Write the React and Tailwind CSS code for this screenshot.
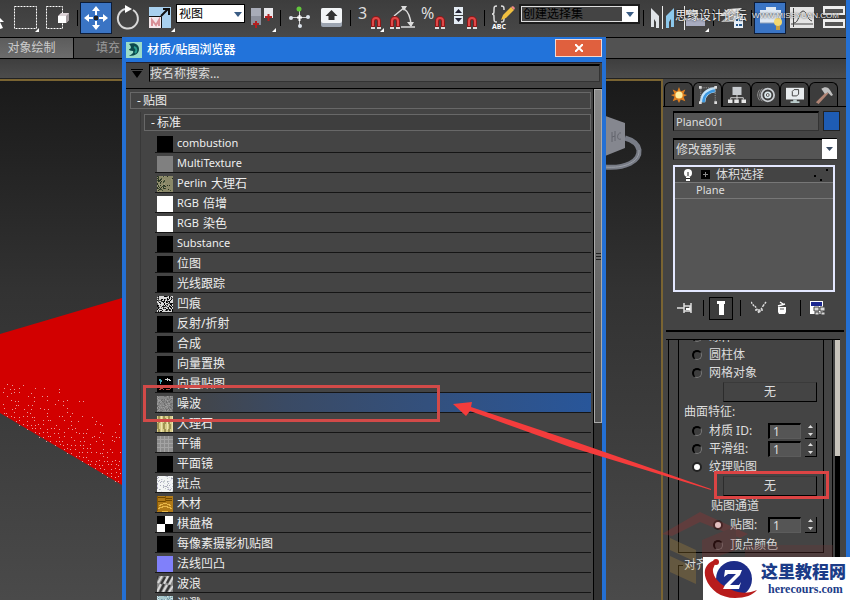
import React from 'react';
import clsx from 'clsx';

const MAPS = [
  { latin: 'combustion', kind: 'black' },
  { latin: 'MultiTexture', kind: 'gray' },
  { latin: 'Perlin', name: '大理石', kind: 'perlin' },
  { latin: 'RGB', name: '倍增', kind: 'white' },
  { latin: 'RGB', name: '染色', kind: 'white' },
  { latin: 'Substance', kind: 'black' },
  { name: '位图', kind: 'black' },
  { name: '光线跟踪', kind: 'black' },
  { name: '凹痕', kind: 'dent' },
  { name: '反射/折射', kind: 'black' },
  { name: '合成', kind: 'black' },
  { name: '向量置换', kind: 'black' },
  { name: '向量贴图', kind: 'vector' },
  { name: '噪波', kind: 'noise', selected: true },
  { name: '大理石', kind: 'marble' },
  { name: '平铺', kind: 'tiles' },
  { name: '平面镜', kind: 'black' },
  { name: '斑点', kind: 'speckle' },
  { name: '木材', kind: 'wood' },
  { name: '棋盘格', kind: 'checker' },
  { name: '每像素摄影机贴图', kind: 'black' },
  { name: '法线凹凸', kind: 'normal' },
  { name: '波浪', kind: 'waves' },
  { name: '泼溅', kind: 'splat' },
];

const BASE = {
  black: '#000',
  gray: '#808080',
  white: '#fff',
  perlin: '#8a8868',
  dent: '#d8d8d8',
  vector: '#000',
  noise: '#888',
  marble: '#d8cc88',
  tiles: '#8c8c8c',
  speckle: '#f2f4f4',
  wood: '#b07a18',
  checker: '#fff',
  normal: '#8080fa',
  waves: '#888',
  splat: '#a8c8cc',
};

const GRAIN = {
  dent: ['#111', '#555', '#000'],
  noise: ['#777', '#9c9c9c', '#6c6c6c'],
  speckle: ['#c4cccc', '#aab', '#dde'],
  perlin: ['#3c4a34', '#26301f', '#9c9a78'],
  splat: ['#7898a0', '#d0e4e8', '#8ab'],
};

// cheap deterministic hash, keeps the thumbnails stable between renders
const rand = (a, b) => {
  const v = Math.sin(a * 127.1 + b * 311.7) * 43758.5453;
  return v - Math.floor(v);
};

function Thumb({ kind }) {
  const grain = GRAIN[kind];
  const dots = [];
  if (grain) {
    for (let y = 0; y < 16; y++) {
      for (let x = 0; x < 16; x++) {
        const limit = kind === 'perlin' ? (x < 8 ? 0.55 : 0.06) : kind === 'speckle' ? 0.25 : 0.5;
        if (rand(x, y) < limit) {
          dots.push(<rect key={`${x}-${y}`} x={x} y={y} width="1" height="1" fill={grain[Math.floor(rand(y + 5, x * 3) * 3)]} />);
        }
      }
    }
  }
  return (
    <svg viewBox="0 0 16 16" className="size-4 shrink-0" shapeRendering="crispEdges">
      <rect width="16" height="16" fill={BASE[kind]} />
      {dots}
      {kind === 'checker' && <path d="M0 0h8v8H0zM8 8h8v8H8z" fill="#000" />}
      {kind === 'tiles' && <path d="M0 3.500h16M0 7.500h16M0 11.500h16M3.500 0v16M7.500 0v16M11.500 0v16" stroke="#a4a4a4" />}
      {kind === 'marble' && (
        <g fill="none">
          <path d="M2 0v5l-1 4 1 7M7 0l1 5-1 5 1 6M12 0v6l1 4-1 6" stroke="#a09454" strokeWidth="2" />
          <path d="M4 0v16M10 2v12M15 0v16" stroke="#eee6b0" />
        </g>
      )}
      {kind === 'wood' && (
        <g fill="none">
          <path d="M1 2c4-2 9 2 14 0M1 5c5 2 9-2 14 0" stroke="#704800" />
          <path d="M2 10c3-3 9-3 12 0M1 13c3-3 11-3 14 0M5 15h6" stroke="#e8b848" />
          <path d="M8 0v6M0 0v15" stroke="#8a5800" />
        </g>
      )}
      {kind === 'vector' && (
        <g fill="none">
          <path d="M3 8V3M2 5l1-2 2 3" stroke="#4aa8b8" />
          <path d="M8 4l3-1 3 2M10 2v3" stroke="#d8d8d8" />
          <path d="M2 14l3-2 2 2M9 13l3 1 3-3" stroke="#b04840" />
        </g>
      )}
      {kind === 'waves' && (
        <g fill="none" strokeWidth="2" shapeRendering="auto">
          <path d="M1 7l4-7M7 8l4-8M12 9l4-8M0 16l4-8M6 16l4-7M12 16l4-6" stroke="#d8d8d8" />
          <path d="M-1 5l2-5M4 8l4-7M10 7l4-7M3 16l4-8M9 16l4-7" stroke="#363636" />
        </g>
      )}
    </svg>
  );
}

function Magnet({ x = 16, y = 14 }) {
  return (
    <g transform={`translate(${x} ${y})`} fill="none">
      <path d="M2 12V5a3 3 0 0 1 6 0v7" stroke="#901818" strokeWidth="4" />
      <path d="M2 10V5a3 3 0 0 1 6 0v5" stroke="#e04848" strokeWidth="2" />
      <path d="M0 12h4M6 12h4" stroke="#ddd" strokeWidth="2" />
    </g>
  );
}

const Corner = ({ x = 27, y = 26 }) => <path d={`M${x + 4} ${y}v4h-4z`} fill="#fff" />;

function Tool({ label, active, children }) {
  return (
    <button
      type="button"
      aria-label={label}
      className={clsx('h-8 w-8 shrink-0', active && 'border border-[#0c1c38] bg-[#3a74c4]')}
    >
      <svg viewBox={active ? '1 1 30 30' : '0 0 32 32'} className="block size-full">
        {children}
      </svg>
    </button>
  );
}

const Sep = () => (
  <span className="flex h-8 w-[6px] shrink-0 items-center justify-center">
    <span className="h-4 w-px bg-black" />
  </span>
);

function Toolbar() {
  return (
    <header className="flex h-[37px] shrink-0 overflow-hidden bg-linear-to-b from-[#3d3d3d] to-[#484848] pt-[2px]">
      <svg viewBox="0 0 10 32" className="h-8 w-[10px] shrink-0">
        <path d="M-6 10l10 10H0l3 6-3 1-3-6-3 2z" fill="#fff" />
      </svg>
      <Tool label="矩形选择区域">
        <rect x="4.500" y="4.500" width="22" height="22" fill="none" stroke="#fff" strokeDasharray="2 1" />
        <Corner x={25} y={26} />
      </Tool>
      <Tool label="窗口/交叉">
        <rect x="4.500" y="4.500" width="16" height="22" fill="none" stroke="#fff" strokeDasharray="2 1" />
        <path d="M16 14l3-3h8v7l-3 3h-8z" fill="#ddd4d8" />
        <path d="M16 14h8v7h-8z" fill="#fff" />
        <path d="M24 14l3-3v7l-3 3z" fill="#a49ca0" />
      </Tool>
      <Sep />
      <Tool label="选择并移动" active>
        <path d="M16 4l4 5h-3v4h-2V9h-3zM16 28l4-5h-3v-4h-2v4h-3zM4 16l5-4v3h4v2H9v3zM28 16l-5-4v3h-4v2h4v3z" fill="#fff" />
        <rect x="14" y="14" width="4" height="4" fill="#222" />
      </Tool>
      <Tool label="选择并旋转">
        <path d="M21 8a10 10 0 1 1-8-1" fill="none" stroke="#d8d8d8" strokeWidth="2" />
        <path d="M13 3l7 4-7 4z" fill="#fff" />
      </Tool>
      <Tool label="选择并缩放">
        <path d="M5 5h22v21H5z" fill="#a8d0ee" />
        <path d="M5 14h13v12H5z" fill="#f4e8ec" />
        <path d="M5 14.500h12.500V26" fill="none" stroke="#111" />
        <path d="M8 24v-6l4 5 3-5v6" fill="none" stroke="#d89098" strokeWidth="2" />
        <path d="M17 14l7-7M19 7h6v6" fill="none" stroke="#111" strokeWidth="2" />
        <Corner />
      </Tool>
      <div className="relative mt-[2px] h-[19px] w-[69px] shrink-0">
        <select aria-label="参考坐标系" className="block size-full appearance-none border border-black bg-white pl-[2px] text-xs leading-none text-black">
          <option>视图</option>
        </select>
        <svg viewBox="0 0 8 5" className="pointer-events-none absolute top-2 right-[3px] h-[5px] w-2">
          <path d="M0 0h8L4 5z" fill="#3a5c84" />
        </svg>
      </div>
      <Tool label="使用轴点中心">
        <path d="M6 6h10v17H6z" fill="#8c909c" />
        <path d="M6 6h10v8H6z" fill="#a8acb8" />
        <path d="M19 6h9v10h-9z" fill="#e8e8ec" />
        <path d="M11 19v7M8 22h6M23.500 12v7M20 15h7" stroke="#b42020" strokeWidth="2" />
        <Corner />
      </Tool>
      <Sep />
      <Tool label="选择并操纵">
        <path d="M16.500 7v17M7 15.500h18" stroke="#d0d0d0" strokeWidth="1" />
        <path d="M14 15.500h5M16.500 13v6" stroke="#fff" strokeWidth="2" />
        <circle cx="16" cy="7" r="2.500" fill="#62c83c" />
        <circle cx="8" cy="16" r="2" fill="#dde4ec" />
        <circle cx="25" cy="15" r="2" fill="#dde4ec" />
        <circle cx="17" cy="24" r="2" fill="#dde4ec" />
      </Tool>
      <Tool label="键盘快捷键覆盖切换">
        <rect x="6" y="6" width="21" height="19" rx="2" fill="#9ca4b0" />
        <rect x="6" y="6" width="21" height="15" rx="2" fill="#f2f4f6" />
        <path d="M16.500 8l6 6h-3v4h-6v-4h-3z" fill="#333" />
      </Tool>
      <Sep />
      <Tool label="3D 捕捉">
        <text x="5" y="17" fontSize="16" fill="#ddd">3</text>
        <Magnet x={18} />
        <Corner />
      </Tool>
      <Tool label="角度捕捉">
        <path d="M9 14L20 5M18 6c6 4 8 12 8 18M16 25h14" fill="none" stroke="#ddd" strokeWidth="1.500" />
        <path d="M16 4h6l-3 5zM22 20h7l-3 5z" fill="#ddd" />
        <Magnet x={5} />
      </Tool>
      <Tool label="百分比捕捉">
        <text x="4" y="17" fontSize="16" fill="#ddd">%</text>
        <Magnet x={18} />
      </Tool>
      <Tool label="微调器捕捉">
        <rect x="5" y="5" width="9" height="8" fill="#e4ecf4" />
        <rect x="5" y="14" width="9" height="8" fill="#e4ecf4" />
        <path d="M6 11h7l-3.500-4zM6 16h7l-3.500 4z" fill="#223" />
        <Magnet x={18} />
      </Tool>
      <Sep />
      <Tool label="编辑命名选择集">
        <path d="M10 4c-3 0-3 1-3 4s0 4-2 4c2 0 2 1 2 4s0 4 3 4M14 4c3 0 3 1 3 4M14 20c3 0 3-1 3-4" fill="none" stroke="#ddd" strokeWidth="1.500" />
        <path d="M14 18l2-5 8-8 3 3-8 8z" fill="#f0c040" />
        <path d="M24 5l3 3 1-2-2-2z" fill="#e88" />
        <text x="5" y="27" fontSize="7" fontWeight="bold" fill="#fff">ABC</text>
      </Tool>
      <div className="relative mt-[2px] h-5 w-[121px] shrink-0 border-2 border-[#1c1c1c] bg-[#444]">
        <select aria-label="命名选择集" className="block size-full appearance-none border border-[#ddd] bg-[#444] pl-px text-xs leading-none text-black">
          <option>创建选择集</option>
        </select>
        <span className="pointer-events-none absolute inset-y-0 right-0 flex w-4 items-center justify-center bg-white">
          <svg viewBox="0 0 8 5" className="h-[5px] w-2"><path d="M0 0h8L4 5z" fill="#3a5c84" /></svg>
        </span>
      </div>
      <Sep />
      <Tool label="镜像">
        <path d="M5 6l8 8v12h-3v-6l-2-3v8H5z" fill="#e0e4e8" />
        <path d="M28 6l-8 8v12h3v-6l2-3v8h3z" fill="#8cc8ec" />
        <path d="M16.500 4v23" stroke="#eee" />
      </Tool>
      <Tool label="对齐">
        <path d="M6.500 4v24" stroke="#eee" />
        <path d="M8 8h12v5H8z" fill="#eee" />
        <path d="M8 16h19v8H8z" fill="#a8acc0" />
        <Corner />
      </Tool>
      <Sep />
      <Tool label="层管理器">
        <path d="M3 14l9-7 14-1-8 8z" fill="#eee" />
        <path d="M5 20l9-8 12-1-7 9z" fill="#bbb" />
        <path d="M18 14h9v12h-9z" fill="#e8f0f8" />
        <path d="M20 18h2M23 18h3M20 23h2M23 23h3" stroke="#26588c" strokeWidth="2" />
      </Tool>
      <Sep />
      <Tool label="石墨建模工具" active>
        <path d="M6 8h6V5h10v3h5v13H6z" fill="#dfe8f2" />
        <path d="M6 12h21M6 21h18" stroke="#8ca0b8" />
        <circle cx="24" cy="20" r="4" fill="#f4d870" />
        <path d="M22 24h4v4h-4z" fill="#c8a040" />
      </Tool>
      <Tool label="曲线编辑器">
        <path d="M4 5h24v21H4z" fill="#e4e4e4" />
        <path d="M7.500 6v19M5 22h22M8 21c5 0 5-12 9-12s3 8 9 10" fill="none" stroke="#444" />
      </Tool>
      <Tool label="图解视图">
        <path d="M5 4h22v9H5zM5 17h22v9H5z" fill="#eee" />
        <path d="M7 7h18v4H7zM7 20h18v4H7z" fill="#555" />
      </Tool>
    </header>
  );
}

function Viewport() {
  const specks = [];
  for (let y = 384; y < 486; y += 4) {
    for (let x = 2; x < 122; x += 4) {
      const px = x + Math.round(rand(x, y) * 2);
      const depth = 413 + px * 0.59 - y;
      if (depth > 0 && rand(y, x) < 0.9 - depth / 75) specks.push([px, y + Math.round(rand(x + 3, y))]);
    }
  }
  return (
    <main className="relative min-w-0 flex-1 overflow-hidden border-t-2 border-r-2 border-[#7a6432] bg-linear-to-b from-[#1a1a1a] via-[#323232] via-40% to-[#4a4a4a]">
      <svg viewBox="0 81 122 519" className="absolute top-0 left-0 h-[519px] w-[122px]">
        <path d="M0 334L122 298V485L0 413z" fill="#d20000" />
        {specks.map(([x, y]) => (
          <rect key={`${x}-${y}`} x={x} y={y} width="1" height="1" fill="#e89c9c" />
        ))}
      </svg>
      <svg viewBox="600 110 46 64" className="absolute top-[29px] left-[600px] h-16 w-[46px]">
        <path d="M604 167c22 2 36-6 35-17-1-6-7-10-14-12" fill="none" stroke="#787c86" strokeWidth="5" />
        <path d="M604 167c22 2 36-6 35-17" fill="none" stroke="#9a9ea6" strokeWidth="1" />
        <path d="M600 114l25 9v25l-25 10z" fill="#85878f" />
        <path d="M612 132v10M615 131v10M612 137l3-1M621 133c-4-1-5 8 0 6" fill="none" stroke="#62646c" />
      </svg>
    </main>
  );
}

const PANEL_TABS = [
  {
    label: '创建',
    icon: (
      <>
        <path d="M10 1l2 5 5-2-2 5 4 1-4 2 2 5-5-2-2 4-2-4-5 2 2-5-4-2 4-1-2-5 5 2z" fill="#e08020" />
        <circle cx="10" cy="10" r="4" fill="#fff0a0" />
      </>
    ),
  },
  {
    label: '修改',
    icon: (
      <>
        <path d="M4 18C4 10 9 5 18 4" fill="none" stroke="#c4e4fa" strokeWidth="6" />
        <path d="M5 18C5 11 10 6 18 5" fill="none" stroke="#3c98e0" strokeWidth="3" />
        <path d="M2 18V2h16v16" fill="none" stroke="#aaa" strokeWidth="1" strokeDasharray="1 1" />
        <path d="M0 0h3v3H0zM17 0h3v3h-3zM17 17h3v3h-3zM0 17h3v3H0z" fill="#ddd" />
      </>
    ),
  },
  {
    label: '层次',
    icon: (
      <>
        <path d="M5 1h10v9H5z" fill="#c8ccd0" />
        <path d="M10 10v5M3 15v-2h14v2" fill="none" stroke="#ddd" />
        <path d="M0 15h5v4H0zM7 15h5v4H7zM15 15h5v4h-5z" fill="#e8e8e8" />
      </>
    ),
  },
  {
    label: '运动',
    icon: (
      <g fill="none">
        <path d="M3 4c-3 4-3 8 0 12M6 3c-4 4-4 10 0 14" stroke="#999" />
        <circle cx="12" cy="10" r="7" stroke="#c8ccd0" strokeWidth="2" />
        <circle cx="12" cy="10" r="3" stroke="#dde8ec" strokeWidth="2" />
        <circle cx="12" cy="10" r="1" fill="#fff" />
      </g>
    ),
  },
  {
    label: '显示',
    icon: (
      <>
        <path d="M0 2h20v13H0z" fill="#e8ecee" />
        <path d="M8 15h4v2h3v2H5v-2h3z" fill="#bcc" />
        <path d="M7 11V6l2-2h5v5l-2 2z" fill="none" stroke="#333" />
      </>
    ),
  },
  {
    label: '实用程序',
    icon: (
      <>
        <path d="M1 18L13 6l2 2L4 20z" fill="#b08474" />
        <path d="M7 3c4-3 8-2 10 2l3 5-2 1-4-4-3 2z" fill="#c0c0c0" />
      </>
    ),
  },
];

function Spinner({ id, label }) {
  return (
    <span className="ml-auto flex items-center gap-1">
      <input
        id={id}
        aria-label={label}
        defaultValue="1"
        className="h-4 w-[33px] border border-t-2 border-l-2 border-[#5c5c5c] border-t-black border-l-black bg-[#555] pl-[3px] text-xs text-[#ddd]"
      />
      <span className="flex h-4 w-3 flex-col border-r border-b border-black">
        <button type="button" aria-label="增加" className="flex h-2 items-center justify-center">
          <svg viewBox="0 0 5 3" className="h-[3px] w-[5px]"><path d="M0 3h5L2.500 0z" fill="#ddd" /></svg>
        </button>
        <button type="button" aria-label="减少" className="flex h-2 items-center justify-center">
          <svg viewBox="0 0 5 3" className="h-[3px] w-[5px]"><path d="M0 0h5L2.500 3z" fill="#ddd" /></svg>
        </button>
      </span>
    </span>
  );
}

function RadioRow({ id, name, label, checked, indent, spinner }) {
  return (
    <div className={clsx('flex h-[18px] items-center pr-[6px]', indent ? 'pl-[34px]' : 'pl-[13px]')}>
      <input
        type="radio"
        id={id}
        name={name}
        defaultChecked={checked}
        className="mr-[7px] size-[10px] shrink-0 appearance-none rounded-full border-t-2 border-r border-b border-l-2 border-t-black border-r-[#777] border-b-[#777] border-l-black bg-[#3e3e3e] checked:border-2 checked:border-[#222] checked:bg-white"
      />
      <label htmlFor={id} className="whitespace-nowrap">{label}</label>
      {spinner && <Spinner id={`${id}-value`} label={label} />}
    </div>
  );
}

const NoneButton = () => (
  <button type="button" className="ml-11 block h-5 w-[94px] border border-t-[#3a3a3a] border-r-black border-b-black border-l-[#2c2c2c] bg-[#444] text-xs leading-none">
    无
  </button>
);

function CommandPanel() {
  return (
    <aside className="flex w-[183px] shrink-0 flex-col overflow-hidden bg-[#444] text-xs text-[#ddd]">
      <nav className="mt-[3px] flex h-[25px] shrink-0 border-b border-black pl-px">
        {PANEL_TABS.map((tab, i) => (
          <button
            key={tab.label}
            type="button"
            aria-label={tab.label}
            className={clsx(
              'flex w-[29px] items-center justify-center rounded-t-md border border-b-0 border-black',
              i === 1 ? 'h-[25px] bg-[#444]' : 'h-6 bg-[#3c3c3c]'
            )}
          >
            <svg viewBox="0 0 20 20" className="size-[18px]">{tab.icon}</svg>
          </button>
        ))}
      </nav>

      <div className="mt-1 flex shrink-0 gap-1 pr-[6px] pl-[10px]">
        <input aria-label="对象名称" defaultValue="Plane001" className="h-5 min-w-0 flex-1 border border-t-2 border-[#333] border-t-black border-l-black bg-[#555] pl-[2px] text-[11px]" />
        <button type="button" aria-label="对象颜色" className="h-5 w-[17px] border border-[#222] bg-[#1e5cb4]" />
      </div>

      <div className="relative mt-[7px] mr-[9px] ml-[10px] h-[22px] shrink-0">
        <select aria-label="修改器列表" className="block size-full appearance-none border border-t-2 border-[#333] border-t-black border-l-black bg-[#555] pl-[2px]">
          <option>修改器列表</option>
        </select>
        <span className="pointer-events-none absolute top-px right-0 flex h-5 w-[15px] items-center justify-center bg-white">
          <svg viewBox="0 0 7 4" className="h-1 w-[7px]"><path d="M0 0h7L3.500 4z" fill="#3a4c64" /></svg>
        </span>
      </div>

      <ul className="mt-[5px] mr-[11px] ml-[10px] h-[127px] shrink-0 border-2 border-[#e4e8ff] bg-[#555]">
        <li className="flex h-4 items-center border-b border-[#777] bg-[#444] pr-[4px] pl-2">
          <svg viewBox="0 0 10 12" className="h-3 w-[10px]">
            <circle cx="5" cy="4" r="4" fill="#fff" />
            <path d="M3 8h4v4H3z" fill="#fff" />
            <path d="M5 3v4M3 9.500h4" stroke="#222" />
          </svg>
          <svg viewBox="0 0 9 9" className="mr-[6px] ml-2 size-[9px]">
            <path d="M0 0h9v9H0z" fill="#000" />
            <path d="M2 4.500h5M4.500 2v5" stroke="#888" />
          </svg>
          <span className="leading-none">体积选择</span>
          <svg viewBox="0 0 16 14" className="ml-auto h-[14px] w-4">
            <path d="M1 7h2v2H1zM7 11h2v2H7zM13 1h2v2h-2z" fill="#000" />
          </svg>
        </li>
        <li className="flex h-4 items-center border-b border-[#777] pl-[21px] text-[11px]">Plane</li>
      </ul>

      <div className="mt-1 flex h-6 shrink-0 items-center pl-[14px]">
        <button type="button" aria-label="锁定堆栈">
          <svg viewBox="0 0 17 12" className="h-3 w-[17px]">
            <path d="M0 6h7M7 1v10M7 4h6v5H7M14 1v10" fill="none" stroke="#ddd" strokeWidth="1.500" />
            <path d="M9 6h4v2H9z" fill="#fff" />
          </svg>
        </button>
        <span className="ml-[9px] h-4 w-px bg-black" />
        <button type="button" aria-label="显示最终结果" className="ml-[5px] flex h-[23px] w-6 items-center justify-center border border-black bg-[#3c3c3c]">
          <svg viewBox="0 0 8 14" className="h-[14px] w-2"><path d="M0 0h8v3H7v11H2V3H0z" fill="#fff" /></svg>
        </button>
        <span className="ml-[7px] h-4 w-px bg-black" />
        <button type="button" aria-label="使唯一" className="ml-[10px]">
          <svg viewBox="0 0 16 14" className="h-[14px] w-4">
            <path d="M0 1l3 4M15 1l-3 4M4 5l4 7 4-7M4 9h8" fill="none" stroke="#ddd" strokeWidth="1.500" strokeDasharray="2 1" />
          </svg>
        </button>
        <button type="button" aria-label="移除修改器" className="ml-[10px]">
          <svg viewBox="0 0 10 14" className="h-[14px] w-[10px]">
            <path d="M1 6h8v5l-1 2H2l-1-2z" fill="#fff" />
            <path d="M1 5l7-2M3 1l3 2" stroke="#fff" strokeWidth="1.500" />
            <path d="M3 8h4" stroke="#555" />
          </svg>
        </button>
        <span className="ml-[13px] h-4 w-px bg-black" />
        <button type="button" aria-label="配置修改器集" className="ml-[9px]">
          <svg viewBox="0 0 16 15" className="h-[15px] w-4">
            <path d="M0 0h13v13H0z" fill="#fff" />
            <path d="M1 1h11v4H1z" fill="#1c2890" />
            <path d="M4 6h5v4H4zM10 6h5v4h-5zM5 11h4v3H5zM11 11h4v3h-4z" fill="#d8d8d8" stroke="#444" />
          </svg>
        </button>
      </div>

      <div className="mt-[10px] mr-[2px] ml-[3px] h-[2px] shrink-0 bg-black" />

      <div className="mt-[7px] mr-[6px] ml-[3px] flex min-h-0 flex-1 border-t border-black pl-[2px]">
        <div className="min-w-0 flex-1 overflow-hidden border-x border-black pr-2 pl-[9px]">
          <fieldset className="-mt-[13px] h-[226px] border border-black">
            <RadioRow id="sphere" name="volume" label="球体" />
            <RadioRow id="cylinder" name="volume" label="圆柱体" />
            <RadioRow id="mesh" name="volume" label="网格对象" />
            <NoneButton />
            <div className="h-5 pl-[5px] leading-5">曲面特征:</div>
            <RadioRow id="matid" name="surface" label="材质 ID:" spinner />
            <RadioRow id="smooth" name="surface" label="平滑组:" spinner />
            <RadioRow id="texture" name="surface" label="纹理贴图" checked />
            <NoneButton />
            <div className="h-5 pl-8 leading-5">贴图通道</div>
            <RadioRow id="mapch" name="channel" label="贴图:" checked indent spinner />
            <div className="mt-[2px]">
              <RadioRow id="vcolor" name="channel" label="顶点颜色" indent />
            </div>
          </fieldset>
          <fieldset className="mt-1 h-20 border border-black pl-1">
            <legend className="px-px">对齐</legend>
          </fieldset>
        </div>
        <div className="ml-[2px] w-[5px] bg-black">
          <div className="h-[116px] w-full bg-[#c8c4bc]" />
        </div>
      </div>
    </aside>
  );
}

function MapBrowser() {
  return (
    <section
      role="dialog"
      aria-label="材质/贴图浏览器"
      className="absolute top-[37px] bottom-0 left-[122px] flex w-[484px] flex-col overflow-hidden border-x-4 border-[#2470d4] bg-[#444] text-xs text-[#eee]"
    >
      <div className="flex h-[25px] shrink-0 items-center bg-[#2273da]">
        <svg viewBox="0 0 16 16" className="size-4">
          <path d="M0 0h16v16H0z" fill="#9adcc8" />
          <path d="M3 2c6-2 10 1 10 5s-3 7-10 7c3-2 5-3 4-5-3 0-4-1-4-2 2 0 3-2 0-5z" fill="#0c4a4c" />
          <path d="M8 5c3 1 3 4 1 6" fill="none" stroke="#2a9c8c" strokeWidth="2" />
        </svg>
        <h1 className="ml-[5px] font-medium text-white">材质/贴图浏览器</h1>
        <button type="button" aria-label="关闭" className="mb-[5px] ml-auto flex h-[18px] w-[47px] items-center justify-center self-end border border-[#f4d8d0] bg-[#e0603e]">
          <svg viewBox="0 0 8 8" className="size-2"><path d="M0 0l8 8M8 0L0 8" stroke="#fff" strokeWidth="2" /></svg>
        </button>
      </div>

      <div className="flex h-[26px] shrink-0 items-start border-t border-[#223] pt-px pr-[2px]">
        <button type="button" aria-label="浏览器选项" className="mt-[5px] ml-[5px] w-[18px]">
          <svg viewBox="0 0 12 9" className="block h-[9px] w-3"><path d="M0 0h12v1H0zM1 2h10L6 9z" fill="#000" /></svg>
        </button>
        <input aria-label="搜索" placeholder="按名称搜索…" className="h-[18px] min-w-0 flex-1 border border-t-2 border-[#333] border-t-black border-l-black bg-[#555] placeholder:text-[#ddd]" />
      </div>

      <div className="flex min-h-0 flex-1 border-t border-black">
        <div className="min-w-0 flex-1 overflow-hidden pt-[3px] pr-[2px] pl-1">
          <button type="button" className="flex h-[17px] w-full items-center border border-[#686868] pl-1">
            <span className="w-2">-</span>贴图
          </button>
          <div className="mt-[3px] ml-[10px] border-l border-[#383838] pt-[2px] pl-[3px]">
            <button type="button" className="flex h-[17px] w-full items-center border border-[#686868] bg-[#3e3e3e] pl-1">
              <span className="w-2">-</span>标准
            </button>
            <ul className="mt-[2px] pl-[11px]">
              {MAPS.map((m, i) => (
                <li key={i} className="border-b border-[#151515]">
                  <button
                    type="button"
                    className={clsx(
                      'flex h-[19px] w-full items-center gap-1 pt-[2px] pl-[2px] text-left whitespace-nowrap',
                      m.selected && 'bg-linear-to-r from-[#444] from-5% via-[#3a4a64] via-30% to-[#28569a]'
                    )}
                  >
                    <Thumb kind={m.kind} />
                    {m.latin && <span className="text-[11px]">{m.latin}</span>}
                    {m.name}
                  </button>
                </li>
              ))}
            </ul>
          </div>
        </div>
        <div className="w-[9px] border-l border-black bg-[#333]">
          <div className="flex h-[334px] flex-col items-center justify-center gap-[2px] border border-[#aaa] bg-linear-to-b from-[#888] to-[#505050]">
            <span className="h-px w-[5px] bg-[#222]" />
            <span className="h-px w-[5px] bg-[#222]" />
            <span className="h-px w-[5px] bg-[#222]" />
          </div>
        </div>
      </div>
    </section>
  );
}

function Annotations() {
  return (
    <svg viewBox="0 0 850 600" className="pointer-events-none absolute top-0 left-0 h-[600px] w-[850px]">
      <g opacity="0.3">
        <path d="M662 534l38-22 48 22-8 4-40-16-28 14z" fill="#a03030" />
        <path d="M670 538l26 12v12l-26-12zM670 556l26 12v16l-26-12z" fill="#b08838" />
        <path d="M702 540l34-14v24l-34 12z" fill="#803030" />
        <path d="M745 545h88v12h-88z" fill="#6c3434" />
      </g>
      <rect x="144.500" y="386.500" width="294" height="34" fill="none" stroke="#d24a48" strokeWidth="3" />
      <rect x="715.500" y="472.500" width="112" height="25" fill="none" stroke="#dc4444" strokeWidth="3" />
      <path d="M453 404l19-2-1 5 99 33 141 49v1l-141-43-100-36-4 5z" fill="#f43c3c" />
    </svg>
  );
}

function SiteLogo() {
  return (
    <div className="absolute right-0 bottom-0 flex h-[43px] w-[147px] items-center bg-white">
      <svg viewBox="0 0 58 43" className="h-[43px] w-[58px] shrink-0">
        <circle cx="31" cy="22" r="18" fill="#1c2c88" />
        <path d="M14 3C5 4-1 12 3 22c4 11 15 19 29 19 10 0 18-3 22-8-7 3-16 4-25 0C16 28 9 19 10 12c1-3 2-5 4-9z" fill="#b81c1c" />
        <circle cx="13" cy="5" r="3" fill="#b81c1c" />
        <path d="M22 13h17l-2 5-10 10h9l2-3-2 7H20l2-4 11-11h-8l-4 3z" fill="#fff" />
      </svg>
      <div className="flex flex-1 flex-col text-[#1c3c88]">
        <span className="font-['Noto_Sans_CJK_SC',sans-serif] text-[17px] leading-[22px] font-black whitespace-nowrap">这里教程网</span>
        <span className="pl-[7px] font-['Liberation_Serif',serif] text-xs leading-[15px] font-bold">herecours.com</span>
      </div>
    </div>
  );
}

export default function App() {
  return (
    <div className="relative flex h-screen overflow-hidden bg-[#444] font-['Noto_Sans','Noto_Sans_CJK_SC',sans-serif]">
      <div className="flex min-w-0 flex-1 flex-col">
        <Toolbar />
        <div className="flex h-[22px] shrink-0 border-y border-black bg-[#525252] text-xs">
          <button type="button" className="w-[74px] border-r border-black bg-linear-to-b from-[#5c5c5c] to-[#6c6c6c] pr-[10px] text-[#ccc]">对象绘制</button>
          <button type="button" className="w-[68px] bg-[#484848] text-[#999]">填充</button>
        </div>
        <div className="h-5 shrink-0 border-b border-[#222] bg-linear-to-b from-[#3e3e3e] to-[#4c4c4c]" />
        <div className="flex min-h-0 flex-1">
          <Viewport />
          <CommandPanel />
        </div>
      </div>
      <div className="w-1 shrink-0 bg-[#2470d4]" />
      <MapBrowser />
      <Annotations />
      <p className="absolute top-2 right-[11px] flex items-center text-xs whitespace-nowrap text-[#eee] text-shadow-[0_0_2px_#000]">
        思缘设计论坛
        <span className="ml-[5px] font-['Liberation_Sans',sans-serif] text-[8px]">WWW.MISSYUAN.COM</span>
      </p>
      <SiteLogo />
    </div>
  );
}
